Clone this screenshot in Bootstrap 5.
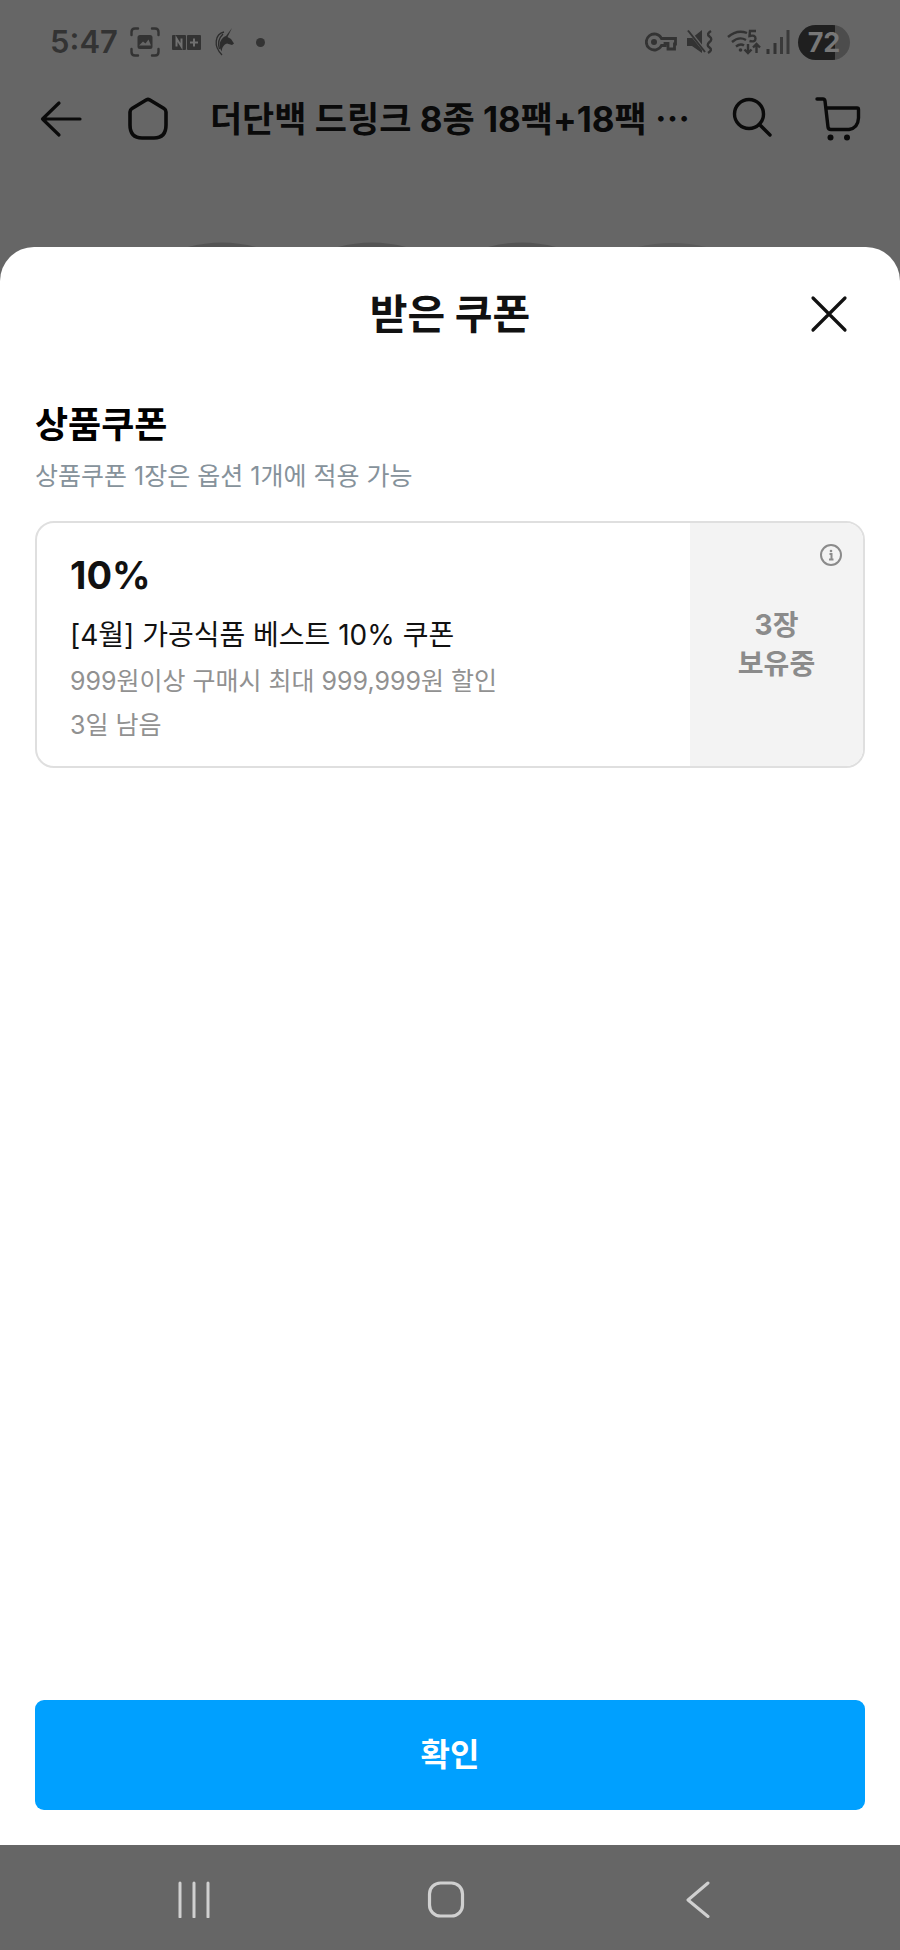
<!DOCTYPE html>
<html lang="ko">
<head>
<meta charset="utf-8">
<meta name="viewport" content="width=device-width, initial-scale=1">
<title>받은 쿠폰</title>
<link href="https://cdn.jsdelivr.net/npm/bootstrap@5.3.0/dist/css/bootstrap.min.css" rel="stylesheet">
<style>
  body { background: #666; color: #111; font-family: Inter, "Noto Sans CJK KR", sans-serif; }
  svg { display: block; flex: none; }
  .btn-icon { padding: 0; border: 0; background: none; color: inherit; line-height: 1; }
  .status-bar { height: 84px; padding: 0 50px; color: #333; }
  .clock { font-size: 31px; line-height: 40px; font-weight: 600; }
  .app-icons { gap: 12px; }
  .battery { width: 52px; height: 35px; border-radius: 18px; background: linear-gradient(90deg, #1f1f1f 72%, #4c4c4c 72%); color: #777; font-size: 27px; line-height: 35px; font-weight: 700; }
  .app-bar { height: 70px; padding: 0 37px; color: #0a0a0a; }
  .app-title { font-size: 35px; line-height: 50px; font-weight: 700; }
  .backdrop-strip { height: 93px; }
  .sheet { border-radius: 34px 34px 0 0; padding: 0 35px 35px; }
  .sheet-head { height: 134px; }
  .sheet-title { font-size: 41px; line-height: 60px; font-weight: 700; }
  .section-title { font-size: 36px; line-height: 52px; font-weight: 700; color: #000; margin-top: 18px; }
  .section-note { font-size: 25px; line-height: 38px; color: #86929b; margin: 6px 0 26px; }
  .coupon { border: 2px solid #dfdfdf; border-radius: 19px; min-height: 247px; }
  .coupon-body { padding: 28px 33px 13px; }
  .coupon-rate { font-size: 38px; line-height: 48px; font-weight: 700; }
  .coupon-name { font-size: 28px; line-height: 42px; margin: 15px 0 3px; color: #111; }
  .coupon-info { font-size: 25px; line-height: 44px; color: #919191; }
  .coupon-stub { width: 173px; background: #f3f3f3; color: #8b8b8b; font-size: 28px; line-height: 39px; font-weight: 700; }
  .stub-info { top: 20px; right: 20px; }
  .btn-confirm { height: 110px; border-radius: 9px; border: 0; background: #00a0ff; color: #fff; font-size: 32px; font-weight: 700; }
  .system-nav { height: 105px; padding: 0 76px 0 68px; color: #d0d0d0; }
</style>
</head>
<body>
<div class="d-flex flex-column min-vh-100">
  <div class="status-bar d-flex align-items-center justify-content-between">
    <div class="app-icons d-flex align-items-center">
      <span class="clock">5:47</span>
      <svg width="30" height="30" viewBox="0 0 30 30" fill="none" stroke="#333" stroke-width="2.4" stroke-linecap="round"><path d="M1.5 8V5Q1.5 1.5 5 1.5H8M22 1.5h3q3.5 0 3.500 3.500V8M28.500 22v3q0 3.500-3.500 3.500h-3M8 28.500H5Q1.500 28.500 1.500 25V22"/><rect x="7.500" y="8" width="15" height="14" rx="2.500" fill="#333" stroke="none"/><path d="M9 18.500l4-4 2.500 2 3-4 2.500 6z" fill="#666" stroke="none"/></svg>
      <svg width="30" height="15" viewBox="0 0 30 15"><rect width="14" height="15" rx="1" fill="#333"/><rect x="15" width="14" height="15" rx="1" fill="#333"/><path d="M4.500 11.500v-8l5 8v-8M22 3.500v8M18 7.500h8" fill="none" stroke="#707070" stroke-width="2"/></svg>
      <svg width="22" height="30" viewBox="0 0 22 30"><path d="M18 1L13.500 10l3.500 2 3 4.500-2 1.500-5-1.500c-3 1-5.500 4-5 8C5 21 5 16 7.500 12.500 9 10.500 10 9.500 12 9z" fill="#2d2d2d"/><path d="M10 5C1 7-1 19 8 28M9 7C5 11 3 15 5.500 22" fill="none" stroke="#2d2d2d" stroke-width="1.300"/></svg>
      <svg class="ms-2" width="9" height="9" viewBox="0 0 9 9"><circle cx="4.500" cy="4.500" r="4.500" fill="#333"/></svg>
    </div>
    <div class="d-flex align-items-center">
      <svg width="32" height="20" viewBox="0 0 32 20" fill="none" stroke="#333" stroke-width="2.800"><path d="M16.500 6.500A8 8 0 1 0 16.500 13.500H20V11.500H23V17H29.500V12H30.500V6.500Z"/><circle cx="9" cy="10" r="3" fill="#333" stroke="none"/></svg>
      <svg class="ms-2 me-1" width="30" height="26" viewBox="0 0 30 26"><path d="M2 9h5l10-8v23L7 17H2z" fill="#333"/><path d="M3 1l17 21" stroke="#666" stroke-width="3.500"/><path d="M3 1.500L20 23" stroke="#333" stroke-width="2"/><path d="M26 2q-5 3-1.500 5.500T24.500 13 24.500 18.500 23 24" fill="none" stroke="#333" stroke-width="2.400"/></svg>
      <svg class="ms-2" width="35" height="27" viewBox="0 0 35 27" fill="none" stroke="#333" stroke-width="2.400"><path d="M1 8Q10 0 20 4M5 13Q12 7 19 11M9 17.500Q13.500 14 17 16.500"/><circle cx="13.500" cy="21" r="1.800" fill="#333" stroke="none"/><path d="M29 2h-6l-.5 5q6-1.500 6 2.500t-6 2.500M21 15v9M17.500 20.500L21 24l3.500-3.500M29.500 24v-9M26 18.500l3.500-3.500 3.500 3.500"/></svg>
      <svg class="ms-1 me-2" width="24" height="26" viewBox="0 0 24 26" stroke="#333" stroke-width="3"><path d="M2 20v5M9 14v11"/><path d="M15.500 8v17M22 1v24" stroke="#3a3a3a"/></svg>
      <span class="battery text-center">72</span>
    </div>
  </div>

  <nav class="app-bar d-flex align-items-center">
    <button class="btn-icon" type="button" aria-label="뒤로"><svg width="50" height="50" viewBox="0 0 50 50" fill="none" stroke="currentColor" stroke-width="3.200" stroke-linecap="round" stroke-linejoin="round"><path d="M43 25H5.500M22 9L5.500 25 22 41"/></svg></button>
    <button class="btn-icon ms-auto me-auto" type="button" aria-label="홈"><svg width="50" height="50" viewBox="0 0 50 50" fill="none" stroke="currentColor" stroke-width="3.600" stroke-linejoin="round"><path d="M23.500 5.800Q25 5 26.500 5.800L41 14.500Q43 15.700 43 18V31Q43 44 31 44H19Q7 44 7 31V18Q7 15.700 9 14.500Z"/></svg></button>
    <div class="app-title text-nowrap">더단백 드링크 8종 18팩+18팩 ⋯</div>
    <button class="btn-icon ms-auto" type="button" aria-label="검색"><svg width="50" height="50" viewBox="0 0 50 50" fill="none" stroke="currentColor" stroke-width="3.400" stroke-linecap="round"><circle cx="22" cy="20" r="14.500"/><path d="M32.500 30.500L43 41"/></svg></button>
    <button class="btn-icon ms-auto" type="button" aria-label="장바구니"><svg width="50" height="50" viewBox="0 0 50 50" fill="none" stroke="currentColor" stroke-width="3.400" stroke-linecap="round" stroke-linejoin="round"><path d="M4 5h6q1.500 0 2 2L15 33q.3 2.500 3 2.500H36Q45 34 45.500 24V15.500q0-1.500-1.500-1.500H13"/><circle cx="17.500" cy="43.500" r="3" fill="currentColor" stroke="none"/><circle cx="34" cy="43.500" r="3" fill="currentColor" stroke="none"/></svg></button>
  </nav>
  <div class="backdrop-strip d-flex align-items-end justify-content-center">
    <svg width="524" height="5" viewBox="0 0 524 5" fill="#545454"><path d="M0 5Q34-4 68 5zM150 5Q184-4 218 5zM300 5Q334-4 368 5z"/><path d="M450 5Q484-3 518 5z" fill="#5b5b5b"/></svg>
  </div>

  <main class="sheet bg-white flex-grow-1 d-flex flex-column">
    <header class="sheet-head position-relative d-flex align-items-center justify-content-center">
      <h1 class="sheet-title m-0">받은 쿠폰</h1>
      <button class="btn-icon position-absolute end-0 me-3" type="button" aria-label="닫기"><svg width="40" height="40" viewBox="0 0 40 40" fill="none" stroke="#111" stroke-width="3.200" stroke-linecap="round"><path d="M4 4l32 32M36 4L4 36"/></svg></button>
    </header>
    <section>
      <h2 class="section-title mb-0">상품쿠폰</h2>
      <p class="section-note">상품쿠폰 1장은 옵션 1개에 적용 가능</p>
      <article class="coupon d-flex overflow-hidden">
        <div class="coupon-body flex-grow-1">
          <div class="coupon-rate">10%</div>
          <div class="coupon-name">[4월] 가공식품 베스트 10% 쿠폰</div>
          <div class="coupon-info">999원이상 구매시 최대 999,999원 할인</div>
          <div class="coupon-info">3일 남음</div>
        </div>
        <div class="coupon-stub position-relative d-flex align-items-center justify-content-center text-center">
          <button class="btn-icon stub-info position-absolute" type="button" aria-label="쿠폰 안내"><svg width="24" height="24" viewBox="0 0 24 24" fill="none" stroke="#8b8b8b" stroke-width="2"><circle cx="12" cy="12" r="10"/><path d="M10.500 11H12.500V17M10 16.500h4.500"/><circle cx="12" cy="8" r="1.300" fill="#8b8b8b" stroke="none"/></svg></button>
          <span>3장<br>보유중</span>
        </div>
      </article>
    </section>
    <button class="btn btn-confirm w-100 mt-auto" type="button">확인</button>
  </main>

  <footer class="system-nav d-flex align-items-center">
    <button class="btn-icon flex-fill d-flex justify-content-center" type="button" aria-label="최근 앱"><svg width="40" height="40" viewBox="0 0 40 40" stroke="currentColor" stroke-width="3" stroke-linecap="round"><path d="M6 5v34M20 5v34M34 5v34"/></svg></button>
    <button class="btn-icon flex-fill d-flex justify-content-center" type="button" aria-label="홈 화면"><svg width="40" height="40" viewBox="0 0 40 40" fill="none" stroke="currentColor" stroke-width="3.200"><rect x="3.500" y="5" width="33" height="33" rx="11"/></svg></button>
    <button class="btn-icon flex-fill d-flex justify-content-center" type="button" aria-label="이전"><svg width="40" height="40" viewBox="0 0 40 40" fill="none" stroke="currentColor" stroke-width="3" stroke-linecap="round" stroke-linejoin="round"><path d="M30 5L10 22 30 38.500"/></svg></button>
  </footer>
</div>
<script src="https://cdn.jsdelivr.net/npm/bootstrap@5.3.0/dist/js/bootstrap.bundle.min.js"></script>
</body>
</html>
